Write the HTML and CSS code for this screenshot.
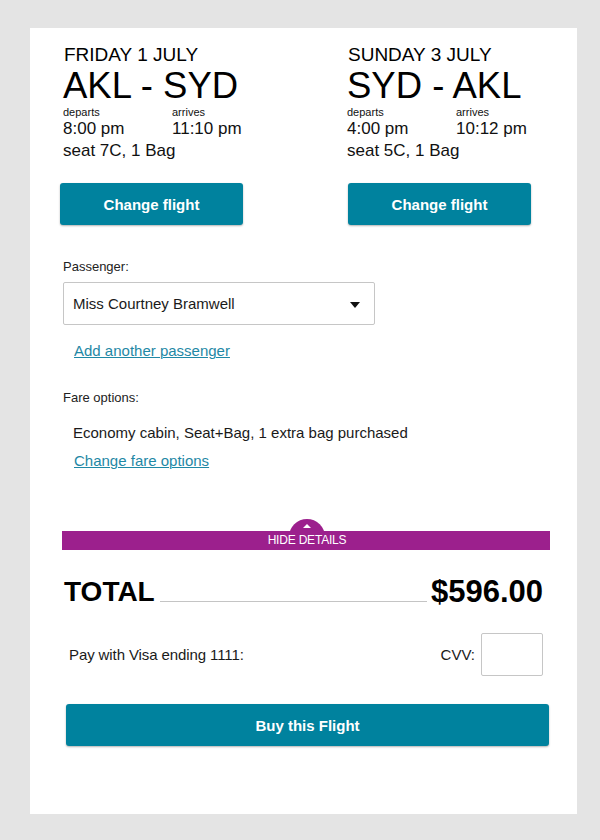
FILE: index.html
```html
<!DOCTYPE html>
<html>
<head>
<meta charset="utf-8">
<link rel="stylesheet" href="styles.css">
</head>
<body>
<div class="card">
  <div class="flights">
    <div class="flight">
      <div class="info info-left">
        <div class="date">FRIDAY 1 JULY</div>
        <div class="route">AKL - SYD</div>
        <div class="times">
          <div class="tlabel">departs</div><div class="tlabel">arrives</div>
          <div class="tval">8:00 pm</div><div class="tval">11:10 pm</div>
        </div>
        <div class="seat">seat 7C, 1 Bag</div>
      </div>
      <button class="btn btn-change">Change flight</button>
    </div>
    <div class="flight">
      <div class="info info-right">
        <div class="date">SUNDAY 3 JULY</div>
        <div class="route">SYD - AKL</div>
        <div class="times">
          <div class="tlabel">departs</div><div class="tlabel">arrives</div>
          <div class="tval">4:00 pm</div><div class="tval">10:12 pm</div>
        </div>
        <div class="seat">seat 5C, 1 Bag</div>
      </div>
      <button class="btn btn-change btn-change-right">Change flight</button>
    </div>
  </div>

  <div class="details">
    <div class="label label-passenger">Passenger:</div>
    <div class="select">
      <span class="select-text">Miss Courtney Bramwell</span>
      <span class="caret"></span>
    </div>
    <a class="link link-add" href="#">Add another passenger</a>
    <div class="label label-fare">Fare options:</div>
    <div class="fare">Economy cabin, Seat+Bag, 1 extra bag purchased</div>
    <a class="link link-fare" href="#">Change fare options</a>
  </div>

  <div class="bar">
    <span class="tab"><span class="tab-arrow"></span></span>
    <span class="bar-text">HIDE DETAILS</span>
  </div>

  <div class="total">
    <div class="total-label">TOTAL</div>
    <div class="total-line"></div>
    <div class="total-price">$596.00</div>
  </div>

  <div class="pay">
    <div class="pay-text">Pay with Visa ending 1111:</div>
    <div class="cvv">
      <span class="cvv-label">CVV:</span>
      <span class="cvv-input"></span>
    </div>
  </div>

  <button class="btn btn-buy">Buy this Flight</button>
</div>
</body>
</html>
```

FILE: styles.css
```css
* { box-sizing: border-box; }
html, body { margin: 0; padding: 0; }
body {
  background: #e4e4e4;
  font-family: "Liberation Sans", Arial, Helvetica, sans-serif;
  color: #111;
  width: 600px;
  height: 840px;
  overflow: hidden;
}
.card {
  background: #fff;
  width: 547px;
  height: 786px;
  margin: 28px 0 0 30px;
  padding-top: 16px;
}
.flights {
  display: grid;
  grid-template-columns: 287px 1fr;
  padding-left: 30px;
}
.flight { display: flex; flex-direction: column; align-items: flex-start; }
.info-left { padding-left: 3px; }
.info-right { padding-left: 0; }
.date { font-size: 19px; line-height: 22px; color: #000; padding-left: 1px; }
.route { font-size: 36.5px; line-height: 40px; color: #000; }
.times { display: grid; grid-template-columns: 109px auto; }
.tlabel { font-size: 11px; line-height: 13px; color: #111; }
.tval { font-size: 17px; line-height: 20px; color: #111; }
.seat { font-size: 17px; line-height: 22px; color: #111; margin-top: 1px; }
.btn {
  border: none;
  background: #00829e;
  color: #fff;
  font-family: "Liberation Sans", Arial, sans-serif;
  font-weight: bold;
  font-size: 15px;
  border-radius: 3px;
  box-shadow: 0 1px 2px rgba(0,0,0,0.3);
  padding: 0;
  cursor: pointer;
}
.btn-change { width: 183px; height: 42px; margin-top: 21px; }
.btn-change-right { margin-left: 1px; }

.details { padding-left: 33px; display: flex; flex-direction: column; align-items: flex-start; }
.label { font-size: 13px; line-height: 15px; color: #222; }
.label-passenger { margin-top: 34px; }
.select {
  margin-top: 8px;
  width: 312px;
  height: 43px;
  border: 1px solid #c6c6c6;
  border-radius: 2px;
  display: flex;
  align-items: center;
  justify-content: space-between;
  padding: 0 14px 0 9px;
}
.select-text { font-size: 15px; color: #1a1a1a; }
.caret {
  width: 0; height: 0;
  border-left: 5px solid transparent;
  border-right: 5px solid transparent;
  border-top: 6px solid #111;
  margin-top: 2px;
}
.link {
  font-size: 15px;
  line-height: 18px;
  color: #1f88a5;
  text-decoration: underline;
  text-decoration-thickness: 1px;
  margin-left: 11px;
}
.link-add { margin-top: 17px; }
.label-fare { margin-top: 30px; }
.fare { font-size: 15px; line-height: 18px; color: #1a1a1a; margin-top: 19px; margin-left: 10px; }
.link-fare { margin-top: 10px; }

.bar {
  position: relative;
  margin: 61px 0 0 32px;
  width: 488px;
  height: 19px;
  background: #9c208d;
  display: flex;
  justify-content: center;
  align-items: center;
}
.tab {
  position: absolute;
  left: 227px;
  top: -12px;
  width: 36px;
  height: 36px;
  border-radius: 50%;
  background: #9c208d;
  clip-path: inset(0 0 7px 0);
}
.tab-arrow {
  position: absolute;
  left: 14px;
  top: 5px;
  width: 0; height: 0;
  border-left: 4px solid transparent;
  border-right: 4px solid transparent;
  border-bottom: 4px solid #fff;
}
.bar-text {
  position: relative;
  color: #fff;
  font-size: 12px;
  letter-spacing: -0.2px;
  line-height: 19px;
  padding-left: 2px;
}

.total {
  display: flex;
  align-items: flex-end;
  margin: 26px 34px 0 34px;
}
.total-label { font-size: 28px; line-height: 32px; font-weight: bold; color: #000; }
.total-line { flex: 1; border-bottom: 1px solid #c4c4c4; margin: 0 4px 6px 5px; }
.total-price { font-size: 31px; line-height: 32px; font-weight: bold; color: #000; }

.pay {
  display: flex;
  align-items: center;
  justify-content: space-between;
  margin: 25px 34px 0 39px;
}
.pay-text { font-size: 15px; color: #1a1a1a; letter-spacing: -0.1px; }
.cvv { display: flex; align-items: center; }
.cvv-label { font-size: 15px; color: #1a1a1a; margin-right: 6px; }
.cvv-input {
  display: block;
  width: 62px;
  height: 43px;
  border: 1px solid #c6c6c6;
  border-radius: 2px;
}
.btn-buy {
  display: block;
  width: 483px;
  height: 42px;
  margin: 28px 0 0 36px;
}
```
